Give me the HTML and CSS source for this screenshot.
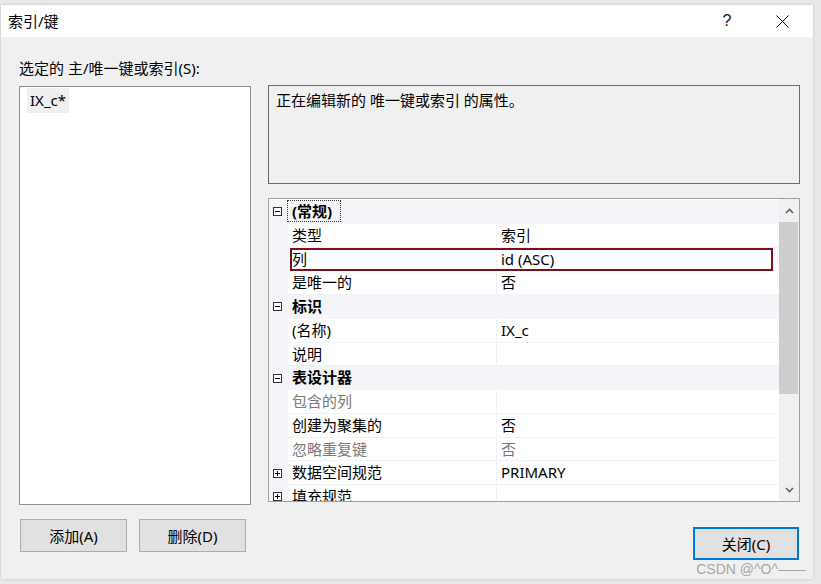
FILE: index.html
```html
<!DOCTYPE html>
<html lang="zh-CN">
<head>
<meta charset="utf-8">
<title>索引/键</title>
<link rel="stylesheet" href="styles.css">
</head>
<body>
<div class="window">
  <div class="titlebar">
    <span class="title">索引/键</span>
    <span class="help">?</span>
    <span class="close-x">
      <svg width="13" height="13" viewBox="0 0 13 13"><path d="M0.5 0.5 L12.5 12.5 M12.5 0.5 L0.5 12.5" stroke="#000" stroke-width="1" fill="none"/></svg>
    </span>
  </div>
  <div class="body">
    <div class="left">
      <div class="label">选定的 主/唯一键或索引(S):</div>
      <div class="listbox">
        <div class="item">IX_c*</div>
      </div>
      <div class="btnrow">
        <button class="btn">添加(A)</button>
        <button class="btn">删除(D)</button>
      </div>
    </div>
    <div class="right">
      <div class="desc">正在编辑新的 唯一键或索引 的属性。</div>
      <div class="grid">
        <div class="rows">
          <div class="row cat">
            <div class="gut"><svg class="exp" width="9" height="9" viewBox="0 0 9 9"><rect x="0.5" y="0.5" width="8" height="8" fill="#fff" stroke="#333"/><path d="M2 4.5 H7" stroke="#000"/></svg></div>
            <div class="name"><span class="focus">(常规)</span></div>
          </div>
          <div class="row">
            <div class="gut"></div>
            <div class="name">类型</div>
            <div class="val">索引</div>
          </div>
          <div class="row selected">
            <div class="gut"></div>
            <div class="name">列</div>
            <div class="val">id (ASC)</div>
          </div>
          <div class="row">
            <div class="gut"></div>
            <div class="name">是唯一的</div>
            <div class="val">否</div>
          </div>
          <div class="row cat">
            <div class="gut"><svg class="exp" width="9" height="9" viewBox="0 0 9 9"><rect x="0.5" y="0.5" width="8" height="8" fill="#fff" stroke="#333"/><path d="M2 4.5 H7" stroke="#000"/></svg></div>
            <div class="name">标识</div>
          </div>
          <div class="row">
            <div class="gut"></div>
            <div class="name">(名称)</div>
            <div class="val">IX_c</div>
          </div>
          <div class="row">
            <div class="gut"></div>
            <div class="name">说明</div>
            <div class="val"></div>
          </div>
          <div class="row cat">
            <div class="gut"><svg class="exp" width="9" height="9" viewBox="0 0 9 9"><rect x="0.5" y="0.5" width="8" height="8" fill="#fff" stroke="#333"/><path d="M2 4.5 H7" stroke="#000"/></svg></div>
            <div class="name">表设计器</div>
          </div>
          <div class="row">
            <div class="gut"></div>
            <div class="name dis">包含的列</div>
            <div class="val"></div>
          </div>
          <div class="row">
            <div class="gut"></div>
            <div class="name">创建为聚集的</div>
            <div class="val">否</div>
          </div>
          <div class="row">
            <div class="gut"></div>
            <div class="name dis">忽略重复键</div>
            <div class="val dis">否</div>
          </div>
          <div class="row">
            <div class="gut"><svg class="exp" width="9" height="9" viewBox="0 0 9 9"><rect x="0.5" y="0.5" width="8" height="8" fill="#fff" stroke="#333"/><path d="M2 4.5 H7 M4.5 2 V7" stroke="#000"/></svg></div>
            <div class="name">数据空间规范</div>
            <div class="val">PRIMARY</div>
          </div>
          <div class="row">
            <div class="gut"><svg class="exp" width="9" height="9" viewBox="0 0 9 9"><rect x="0.5" y="0.5" width="8" height="8" fill="#fff" stroke="#333"/><path d="M2 4.5 H7 M4.5 2 V7" stroke="#000"/></svg></div>
            <div class="name">填充规范</div>
            <div class="val"></div>
          </div>
        </div>
        <div class="scroll">
          <div class="arrow"><svg width="9" height="6" viewBox="0 0 9 6"><path d="M1 5 L4.5 1.5 L8 5" stroke="#606060" stroke-width="1.6" fill="none"/></svg></div>
          <div class="track"><div class="thumb"></div></div>
          <div class="arrow"><svg width="9" height="6" viewBox="0 0 9 6"><path d="M1 1 L4.5 4.5 L8 1" stroke="#606060" stroke-width="1.6" fill="none"/></svg></div>
        </div>
      </div>
      <div class="closerow">
        <button class="btn primary">关闭(C)</button>
      </div>
    </div>
  </div>
  <div class="watermark">CSDN @^O^——</div>
</div>
</body>
</html>
```

FILE: styles.css
```css
* { box-sizing: border-box; }
html, body { margin: 0; padding: 0; }
body {
  width: 821px;
  height: 584px;
  overflow: hidden;
  background: #e9e9e9;
  font-family: "Noto Sans", "Noto Sans CJK SC", sans-serif;
  font-size: 15px;
  color: #000;
}
.window {
  position: relative;
  margin: 5px 0 0 1px;
  width: 812px;
  height: 574px;
  background: #f0f0f0;
  display: flex;
  flex-direction: column;
  box-shadow: 0 0 3px rgba(0,0,0,0.18);
}
.titlebar {
  height: 32px;
  flex: none;
  background: #fff;
  display: flex;
  align-items: center;
  padding-left: 7px;
  padding-right: 8px;
}
.title { flex: 1; line-height: 20px; }
.help {
  width: 20px;
  text-align: center;
  font-size: 16px;
  font-family: "Liberation Sans", sans-serif;
  color: #111;
  margin-right: 22px;
}
.close-x {
  width: 46px;
  height: 32px;
  display: flex;
  align-items: center;
  justify-content: center;
}
.body {
  display: flex;
  gap: 17px;
  padding: 21px 12px 0 18px;
}
.left { width: 232px; display: flex; flex-direction: column; }
.label { height: 20px; line-height: 20px; }
.listbox {
  margin-top: 8px;
  height: 419px;
  background: #fff;
  border: 1px solid #8e9096;
  padding: 1px 7px;
}
.item {
  display: inline-block;
  height: 25px;
  line-height: 25px;
  padding: 0 3px;
  background: #efefef;
}
.btnrow { margin-top: 14px; display: flex; gap: 12px; padding-left: 1px; }
.btn {
  width: 107px;
  height: 33px;
  background: #e1e1e1;
  border: 1px solid #adadad;
  font-family: inherit;
  font-size: 15px;
  color: #000;
  padding: 0;
}
.right { width: 532px; display: flex; flex-direction: column; padding-top: 27px; }
.desc {
  height: 99px;
  border: 1px solid #6b6b6b;
  background: #f0f0f0;
  padding: 4px 7px;
  line-height: 20px;
}
.grid {
  margin-top: 14px;
  height: 304px;
  border: 1px solid #a0a0a0;
  background: #fff;
  display: flex;
}
.rows {
  width: 510px;
  overflow: hidden;
  padding-top: 1px;
}
.row {
  position: relative;
  height: 23.75px;
  display: flex;
  line-height: 22px;
}
.gut {
  width: 19px;
  flex: none;
  background: #f3f5f9;
  display: flex;
  align-items: center;
  padding-left: 4px;
}
.name {
  width: 209px;
  flex: none;
  padding-left: 4px;
  border-bottom: 1px solid #eef1f6;
  border-right: 1px solid #eef1f6;
  white-space: nowrap;
}
.val {
  flex: 1;
  padding-left: 4px;
  border-bottom: 1px solid #eef1f6;
  white-space: nowrap;
}
.dis { color: #7a7a7a; }
.row.cat { background: #f3f5f9; }
.row.cat .name {
  flex: 1;
  border: none;
  font-weight: bold;
}
.row.cat .name .focus {
  display: inline-block;
  height: 22px;
  line-height: 20px;
  margin-left: -5px;
  padding: 0 8px 0 4px;
  border: 1px dotted #333;
}
.row.selected::after {
  content: "";
  position: absolute;
  left: 21px;
  right: 6px;
  top: 0;
  bottom: 0;
  border: 2px solid #7b0f1e;
}
.scroll {
  width: 20px;
  flex: none;
  background: #f0f0f0;
  display: flex;
  flex-direction: column;
}
.arrow {
  height: 23px;
  flex: none;
  display: flex;
  align-items: center;
  justify-content: center;
}
.track { flex: 1; padding: 0 1px 0 0; }
.thumb { height: 172px; background: #cdcdcd; }
.closerow { margin-top: 25px; display: flex; justify-content: flex-end; padding-right: 1px; }
.btn.primary { width: 106px; border: 2px solid #0078d7; }
.watermark {
  position: absolute;
  right: 7px;
  bottom: 2px;
  font-family: "Liberation Sans", sans-serif;
  font-size: 14px;
  line-height: 16px;
  color: #a6a6a6;
}
```
